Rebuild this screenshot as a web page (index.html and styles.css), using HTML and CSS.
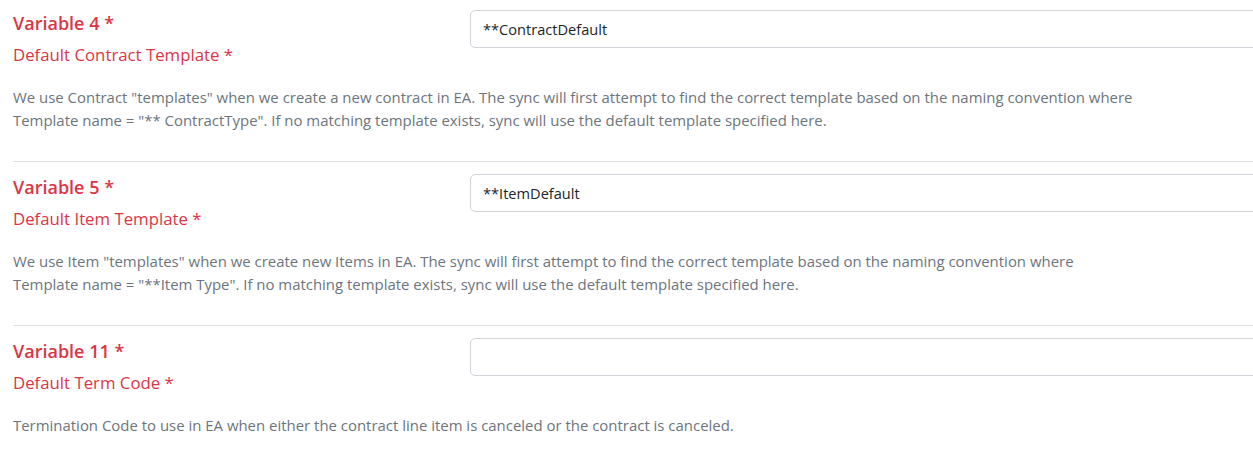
FILE: index.html
```html
<!DOCTYPE html>
<html lang="en">
<head>
<meta charset="utf-8">
<title>Variables</title>
<link rel="stylesheet" href="styles.css">
</head>
<body>
<div class="page">
  <section class="setting">
    <div class="setting-head">
      <div class="setting-labels">
        <h5 class="setting-title">Variable 4 *</h5>
        <label class="setting-label" for="v4">Default Contract Template *</label>
      </div>
      <input class="setting-input" id="v4" type="text" value="**ContractDefault">
    </div>
    <p class="setting-desc">We use Contract "templates" when we create a new contract in EA. The sync will first attempt to find the correct template based on the naming convention where<br>Template name = "** ContractType". If no matching template exists, sync will use the default template specified here.</p>
  </section>
  <section class="setting">
    <div class="setting-head">
      <div class="setting-labels">
        <h5 class="setting-title">Variable 5 *</h5>
        <label class="setting-label" for="v5">Default Item Template *</label>
      </div>
      <input class="setting-input" id="v5" type="text" value="**ItemDefault">
    </div>
    <p class="setting-desc">We use Item "templates" when we create new Items in EA. The sync will first attempt to find the correct template based on the naming convention where<br>Template name = "**Item Type". If no matching template exists, sync will use the default template specified here.</p>
  </section>
  <section class="setting">
    <div class="setting-head">
      <div class="setting-labels">
        <h5 class="setting-title">Variable 11 *</h5>
        <label class="setting-label" for="v11">Default Term Code *</label>
      </div>
      <input class="setting-input" id="v11" type="text" value="">
    </div>
    <p class="setting-desc">Termination Code to use in EA when either the contract line item is canceled or the contract is canceled.</p>
  </section>
</div>
</body>
</html>
```
FILE: styles.css
```css
html, body {
  margin: 0;
  padding: 0;
  background: #ffffff;
  overflow: hidden;
}
body {
  font-family: "Open Sans", "Noto Sans", sans-serif;
  color: #212529;
}
.page {
  width: 1400px;
  padding: 0 0 0 13px;
}
.setting {
  padding: 12px 0 0 0;
  border-bottom: 1px solid #dee2e6;
}
.setting:first-child {
  padding-top: 10px;
}
.setting:last-child {
  border-bottom: none;
}
.setting-head {
  display: grid;
  grid-template-columns: 457px 1fr;
  align-items: start;
}
.setting-labels {
  display: flex;
  flex-direction: column;
}
.setting-title {
  margin: 1px 0 0 0;
  font-size: 18px;
  font-weight: 600;
  line-height: 24px;
  color: #dc3545;
}
.setting-label {
  margin-top: 8px;
  font-size: 16.8px;
  line-height: 24px;
  color: #dc3545;
}
.setting-input {
  box-sizing: border-box;
  width: 100%;
  height: 38px;
  padding: 6px 12px;
  border: 1px solid #ced4da;
  border-radius: 5px;
  font-family: inherit;
  font-size: 14.6px;
  color: #212529;
  background: #fff;
  outline: none;
}
.setting-desc {
  margin: 19px 0 0 0;
  padding-bottom: 29px;
  font-size: 14.95px;
  line-height: 23px;
  color: #6c757d;
}
```
